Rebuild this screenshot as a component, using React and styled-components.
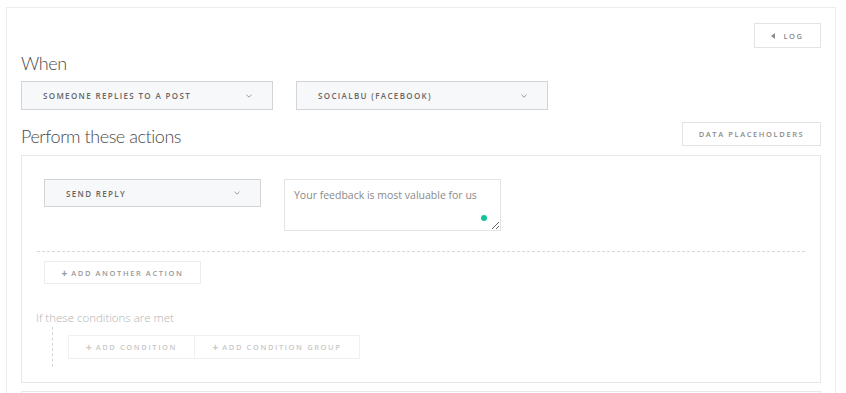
import React from "react";
import styled, { createGlobalStyle } from "styled-components";

const Global = createGlobalStyle`
  html, body { margin: 0; padding: 0; background: #fff; }
  body { font-family: "Open Sans", "Liberation Sans", sans-serif; color: #555; }
  * { box-sizing: border-box; }
`;

const Page = styled.div`
  padding: 7px 0 0 6px;
`;

const Card = styled.div`
  width: 830px;
  border: 1px solid #ececec;
  border-bottom: none;
  padding: 15px 14px 0 14px;
  background: #fff;
`;

const TopBar = styled.div`
  display: flex;
  justify-content: flex-end;
`;

const Heading = styled.h2`
  margin: ${(p) => p.$mt || 0}px 0 0 0;
  font-family: "Lato", "Open Sans", sans-serif;
  font-weight: 300;
  font-size: 18px;
  letter-spacing: -0.45px;
  line-height: 24px;
  color: #4a4a4a;
`;

const Button = styled.button`
  display: inline-flex;
  align-items: center;
  justify-content: center;
  gap: 8px;
  height: ${(p) => p.$h || 24}px;
  width: ${(p) => (p.$w ? p.$w + "px" : "auto")};
  padding: 0 15px;
  background: #fff;
  border: 1px solid #e3e3e3;
  border-radius: 0;
  font-family: "Open Sans", sans-serif;
  font-weight: 600;
  font-size: 7.5px;
  letter-spacing: 1.6px;
  text-transform: uppercase;
  color: #8a8a8a;
  cursor: pointer;
`;

const SelectsRow = styled.div`
  display: flex;
  gap: 23px;
  margin-top: 6px;
`;

const Select = styled.div`
  display: flex;
  align-items: center;
  justify-content: space-between;
  width: ${(p) => p.$w}px;
  height: ${(p) => p.$h || 29}px;
  padding: 0 20px 0 21px;
  background: #f7f8fa;
  border: 1px solid #d2d4d7;
  font-weight: 600;
  font-size: 8px;
  letter-spacing: 1.35px;
  text-transform: uppercase;
  color: #666;
`;

const Chevron = () => (
  <svg width="6" height="4" viewBox="0 0 6 4">
    <polyline points="0.5,0.8 3,3.2 5.5,0.8" fill="none" stroke="#9a9a9a" strokeWidth="1" />
  </svg>
);

const LeftTri = () => (
  <svg width="4" height="6" viewBox="0 0 4 6">
    <polygon points="4,0 0,3 4,6" fill="#8a8a8a" />
  </svg>
);

const ActionsHeader = styled.div`
  display: flex;
  justify-content: space-between;
  align-items: flex-start;
  margin-top: 12px;
`;

const InnerCard = styled.div`
  margin-top: ${(p) => p.$mt || 0}px;
  border: 1px solid #e8e8e8;
  padding: 15px;
  min-height: ${(p) => p.$minh || 0}px;
`;

const ActionRow = styled.div`
  display: flex;
  gap: 23px;
  padding: 8px 7px 20px;
  border-bottom: 1px dashed #d8d8d8;
`;

const TextWrap = styled.div`
  position: relative;
  width: 217px;
  height: 52px;
`;

const TextArea = styled.textarea`
  width: 100%;
  height: 100%;
  border: 1px solid #e3e3e3;
  padding: 8px 9px;
  font-family: "Open Sans", sans-serif;
  font-size: 10.5px;
  color: #8a8a8a;
  resize: both;
  outline: none;
  display: block;
`;

const Dot = styled.span`
  position: absolute;
  right: 14px;
  bottom: 10px;
  width: 6px;
  height: 6px;
  border-radius: 50%;
  background: #15c39a;
`;

const AddAction = styled(Button)`
  margin: 9px 0 0 7px;
  height: 23px;
  width: 157px;
  border-color: #ececec;
  color: #999;
  gap: 4px;
`;

const Plus = styled.span`
  font-size: 10px;
  font-weight: 700;
  letter-spacing: 0;
  line-height: 1;
`;

const CondLabel = styled.div`
  margin: 26px 0 0 -1px;
  font-family: "Open Sans", sans-serif;
  font-weight: 300;
  font-size: 11.5px;
  letter-spacing: 0;
  line-height: 15px;
  color: #b3b3b3;
`;

const CondTree = styled.div`
  display: flex;
  margin: 2px 0 0 15px;
  border-left: 1px dashed #d5d5d5;
  padding: 8px 0 8px 15px;
`;

const CondGroup = styled.div`
  display: flex;
  border: 1px solid #f0f0f0;
`;

const CondButton = styled.button`
  display: inline-flex;
  align-items: center;
  justify-content: center;
  gap: 4px;
  height: 22px;
  width: ${(p) => p.$w}px;
  background: #fff;
  border: none;
  border-left: ${(p) => (p.$first ? "none" : "1px solid #f0f0f0")};
  font-family: "Open Sans", sans-serif;
  font-weight: 600;
  font-size: 7.5px;
  letter-spacing: 1.6px;
  text-transform: uppercase;
  color: #c8c8c8;
  padding: 0;
`;

export default function App() {
  return (
    <>
      <Global />
      <Page>
        <Card>
          <TopBar>
            <Button $h={25} $w={67}>
              <LeftTri />
              Log
            </Button>
          </TopBar>
          <Heading $mt={3}>When</Heading>
          <SelectsRow>
            <Select $w={252}>
              <span>Someone replies to a post</span>
              <Chevron />
            </Select>
            <Select $w={252}>
              <span>SocialBu (Facebook)</span>
              <Chevron />
            </Select>
          </SelectsRow>
          <ActionsHeader>
            <Heading $mt={2}>Perform these actions</Heading>
            <Button $h={24} $w={139}>Data placeholders</Button>
          </ActionsHeader>
          <InnerCard $mt={7}>
            <ActionRow>
              <Select $w={217} $h={28}>
                <span>Send reply</span>
                <Chevron />
              </Select>
              <TextWrap>
                <TextArea defaultValue="Your feedback is most valuable for us" />
                <Dot />
              </TextWrap>
            </ActionRow>
            <AddAction>
              <Plus>+</Plus>
              Add another action
            </AddAction>
            <CondLabel>If these conditions are met</CondLabel>
            <CondTree>
              <CondGroup>
                <CondButton $first $w={125}>
                  <Plus>+</Plus>
                  Add condition
                </CondButton>
                <CondButton $w={165}>
                  <Plus>+</Plus>
                  Add condition group
                </CondButton>
              </CondGroup>
            </CondTree>
          </InnerCard>
          <InnerCard $mt={8} $minh={60} />
        </Card>
      </Page>
    </>
  );
}
